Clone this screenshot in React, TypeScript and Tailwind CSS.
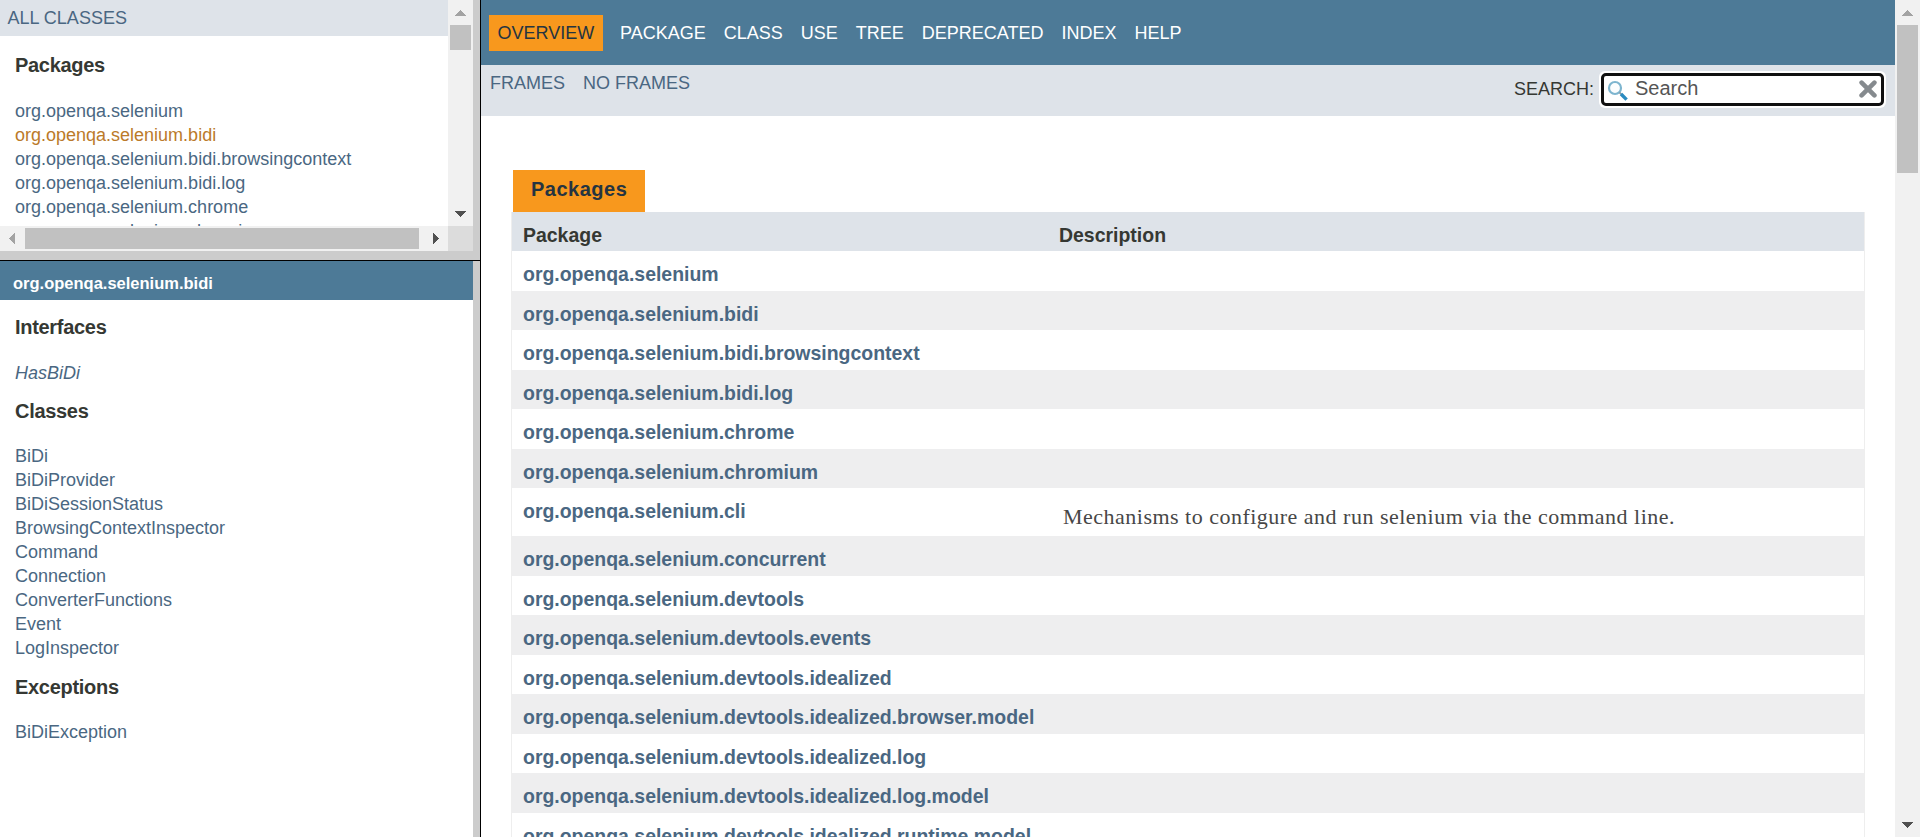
const topPackages = [
  'org.openqa.selenium',
  'org.openqa.selenium.bidi',
  'org.openqa.selenium.bidi.browsingcontext',
  'org.openqa.selenium.bidi.log',
  'org.openqa.selenium.chrome',
  'org.openqa.selenium.chromium',
];

const classes = [
  'BiDi',
  'BiDiProvider',
  'BiDiSessionStatus',
  'BrowsingContextInspector',
  'Command',
  'Connection',
  'ConverterFunctions',
  'Event',
  'LogInspector',
];

const navItems = ['PACKAGE', 'CLASS', 'USE', 'TREE', 'DEPRECATED', 'INDEX', 'HELP'];

const rows: { name: string; height: string; description?: string }[] = [
  { name: 'org.openqa.selenium', height: 'h-[40px]' },
  { name: 'org.openqa.selenium.bidi', height: 'h-[39px]' },
  { name: 'org.openqa.selenium.bidi.browsingcontext', height: 'h-[40px]' },
  { name: 'org.openqa.selenium.bidi.log', height: 'h-[39px]' },
  { name: 'org.openqa.selenium.chrome', height: 'h-[40px]' },
  { name: 'org.openqa.selenium.chromium', height: 'h-[39px]' },
  {
    name: 'org.openqa.selenium.cli',
    height: 'h-[48px]',
    description: 'Mechanisms to configure and run selenium via the command line.',
  },
  { name: 'org.openqa.selenium.concurrent', height: 'h-[40px]' },
  { name: 'org.openqa.selenium.devtools', height: 'h-[39px]' },
  { name: 'org.openqa.selenium.devtools.events', height: 'h-[40px]' },
  { name: 'org.openqa.selenium.devtools.idealized', height: 'h-[39px]' },
  { name: 'org.openqa.selenium.devtools.idealized.browser.model', height: 'h-[40px]' },
  { name: 'org.openqa.selenium.devtools.idealized.log', height: 'h-[39px]' },
  { name: 'org.openqa.selenium.devtools.idealized.log.model', height: 'h-[40px]' },
  { name: 'org.openqa.selenium.devtools.idealized.runtime.model', height: 'h-[40px]' },
];

type Direction = 'up' | 'down' | 'left' | 'right';

const arrowPoints: Record<Direction, string> = {
  up: '7,16 18,16 12.5,10',
  down: '7,10 18,10 12.5,16',
  left: '15,7 15,18 9,12.5',
  right: '10,7 10,18 16,12.5',
};

function Arrow({ direction, dim = false }: { direction: Direction; dim?: boolean }) {
  return (
    <svg className="block size-[25px] shrink-0" viewBox="0 0 25 25" shapeRendering="crispEdges">
      <polygon points={arrowPoints[direction]} fill={dim ? '#a3a3a3' : '#505050'} />
    </svg>
  );
}

function Heading({ children }: { children: string }) {
  return (
    <h2 className="text-[20px] leading-[24px] font-bold tracking-[-0.3px] text-[#353833]">{children}</h2>
  );
}

function PackagesFrame() {
  return (
    <section className="flex h-[251px] flex-col">
      <div className="flex h-[226px]">
        <div className="min-w-0 flex-1 overflow-hidden">
          <div className="h-[36px] bg-[#dee3e9] pt-[6px] pl-[7.5px] leading-[24px] text-[#4a6782]">ALL CLASSES</div>
          <div className="pt-[17px] pl-[15px]">
            <Heading>Packages</Heading>
            <ul className="mt-[22px]">
              {topPackages.map((name, i) => (
                <li key={name} className={i === 1 ? 'leading-[24px] text-[#bb7a2a]' : 'leading-[24px] text-[#4a6782]'}>
                  {name}
                </li>
              ))}
            </ul>
          </div>
        </div>
        <div className="flex w-[25px] flex-col bg-[#f1f1f1]">
          <Arrow direction="up" dim />
          <div className="mx-[2px] h-[25px] bg-[#c1c1c1]" />
          <div className="flex-1" />
          <Arrow direction="down" />
        </div>
      </div>
      <div className="flex h-[25px] bg-[#f1f1f1]">
        <Arrow direction="left" dim />
        <div className="my-[2px] w-[394px] bg-[#c1c1c1]" />
        <div className="flex-1" />
        <Arrow direction="right" />
        <div className="w-[25px] bg-[#dcdcdc]" />
      </div>
    </section>
  );
}

function ClassesFrame() {
  return (
    <section className="min-h-0 flex-1 overflow-hidden bg-white">
      <h1 className="h-[39px] bg-[#4d7a97] pt-[10px] pl-[13px] text-[16.5px] leading-[24px] font-bold text-white">
        org.openqa.selenium.bidi
      </h1>
      <div className="pt-[15px] pl-[15px] leading-[24px] text-[#4a6782]">
        <Heading>Interfaces</Heading>
        <div className="mt-[22px] italic">HasBiDi</div>
        <div className="mt-[14px]">
          <Heading>Classes</Heading>
        </div>
        <ul className="mt-[21px]">
          {classes.map((name) => (
            <li key={name}>{name}</li>
          ))}
        </ul>
        <div className="mt-[15px]">
          <Heading>Exceptions</Heading>
        </div>
        <div className="mt-[21px]">BiDiException</div>
      </div>
    </section>
  );
}

function SearchBox() {
  return (
    <div className="flex items-start pt-[6px]">
      <span className="mt-[6px] mr-[5px] leading-[24px] text-[#353833]">SEARCH:</span>
      <div className="mr-[9px] rounded-[6px] bg-white p-[2px]">
        <div className="flex h-[33px] w-[283px] rounded-[5px] border-[3px] border-[#101010] bg-white">
          <svg className="mt-[4px] ml-[3px] size-[22px]" viewBox="0 0 22 22" fill="none">
            <circle cx="8" cy="8" r="6" stroke="#7db5cf" strokeWidth="2.2" fill="#fbfdfe" />
            <path d="M12.4 12.4 14.4 14.4" stroke="#8a9ba5" strokeWidth="1.8" />
            <path d="M14 14 19.6 19.6" stroke="#2b8bc0" strokeWidth="3.4" />
          </svg>
          <span className="ml-[6px] text-[20px] leading-[24px] text-[#555555]">Search</span>
          <svg className="mt-[4px] mr-[4px] ml-auto size-[18px]" viewBox="0 0 18 18" fill="none">
            <path d="M2.6 2.6 15.4 15.4M15.4 2.6 2.6 15.4" stroke="#858a8e" strokeWidth="4.6" strokeLinecap="round" />
          </svg>
        </div>
      </div>
    </div>
  );
}

function PackageTable() {
  return (
    <div className="ml-[30px] w-[1354px] pt-[54px]">
      <div className="ml-[2px] h-[42px] w-[132px] bg-[#f8981d] pt-[7px] pl-[18px] text-[20px] leading-[24px] font-bold tracking-[0.5px] text-[#253441]">
        Packages
      </div>
      <div className="border-x border-[#eeeeee] text-[19.47px] leading-[24px] font-bold">
        <div className="flex h-[39px] bg-[#dee3e9] pt-[11px] text-[#353833]">
          <div className="w-[547px] pl-[11px]">Package</div>
          <div>Description</div>
        </div>
        {rows.map((row, i) => (
          <div key={row.name} className={`flex ${row.height} ${i % 2 ? 'bg-[#eeeeef]' : 'bg-white'}`}>
            <div className="w-[547px] pt-[11px] pl-[11px] text-[#4a6782]">{row.name}</div>
            {row.description && (
              <p className="pt-[17px] pl-[4px] font-['Liberation_Serif',serif] text-[22px] font-normal tracking-[0.49px] whitespace-nowrap text-[#474747]">
                {row.description}
              </p>
            )}
          </div>
        ))}
      </div>
    </div>
  );
}

export default function App() {
  return (
    <div className="flex h-[837px] w-[1920px] overflow-hidden bg-white font-['Liberation_Sans',Arial,sans-serif] text-[18px]">
      <aside className="flex w-[480px] flex-col bg-[#cccccc]">
        <div className="w-[473px] bg-white">
          <PackagesFrame />
        </div>
        <div className="h-[9px] shrink-0" />
        <div className="h-px shrink-0 bg-black" />
        <div className="flex min-h-0 w-[473px] flex-1">
          <ClassesFrame />
        </div>
      </aside>
      <div className="w-px bg-black" />
      <main className="w-[1414px] overflow-hidden">
        <nav className="flex h-[65px] items-start bg-[#4d7a97] pt-[15px] pl-[8px] leading-[24px] text-white">
          <span className="mr-[17px] h-[36px] w-[114px] bg-[#f8981d] pt-[6px] pl-[8.5px] text-[#253441]">OVERVIEW</span>
          <div className="flex gap-[18px] pt-[6px]">
            {navItems.map((item) => (
              <span key={item}>{item}</span>
            ))}
          </div>
        </nav>
        <div className="flex h-[51px] justify-between bg-[#dee3e9]">
          <div className="flex gap-[18px] pt-[6px] pl-[9px] leading-[24px] text-[#4a6782]">
            <span>FRAMES</span>
            <span>NO FRAMES</span>
          </div>
          <SearchBox />
        </div>
        <PackageTable />
      </main>
      <div className="flex w-[25px] flex-col bg-[#f1f1f1]">
        <Arrow direction="up" dim />
        <div className="mx-[2px] h-[148px] bg-[#c1c1c1]" />
        <div className="flex-1" />
        <Arrow direction="down" />
      </div>
    </div>
  );
}
